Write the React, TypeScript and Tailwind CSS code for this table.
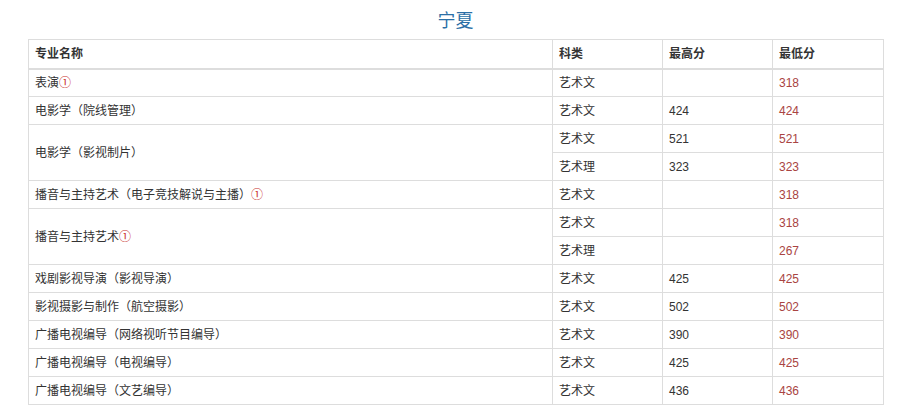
import React from "react";

type Row = { name: React.ReactNode; kind: string; max: string; min: string; span?: number; skipName?: boolean };

const Mark = () => <span className="text-[#c9302c]">①</span>;

const rows: Row[] = [
  { name: <>表演<Mark /></>, kind: "艺术文", max: "", min: "318" },
  { name: "电影学（院线管理）", kind: "艺术文", max: "424", min: "424" },
  { name: "电影学（影视制片）", kind: "艺术文", max: "521", min: "521", span: 2 },
  { name: null, kind: "艺术理", max: "323", min: "323", skipName: true },
  { name: <>播音与主持艺术（电子竞技解说与主播）<Mark /></>, kind: "艺术文", max: "", min: "318" },
  { name: <>播音与主持艺术<Mark /></>, kind: "艺术文", max: "", min: "318", span: 2 },
  { name: null, kind: "艺术理", max: "", min: "267", skipName: true },
  { name: "戏剧影视导演（影视导演）", kind: "艺术文", max: "425", min: "425" },
  { name: "影视摄影与制作（航空摄影）", kind: "艺术文", max: "502", min: "502" },
  { name: "广播电视编导（网络视听节目编导）", kind: "艺术文", max: "390", min: "390" },
  { name: "广播电视编导（电视编导）", kind: "艺术文", max: "425", min: "425" },
  { name: "广播电视编导（文艺编导）", kind: "艺术文", max: "436", min: "436" },
];

export default function App() {
  const td = "border border-[#dddddd] px-[6px] h-[28px] py-0 align-middle";
  const th = "border border-[#dddddd] border-b-2 px-[6px] h-[29px] py-0 align-middle text-left font-bold";
  return (
    <div
      className="bg-white min-h-[412px] text-[#333333] text-[12px]"
      style={{ fontFamily: '"Liberation Sans", Arial, "Noto Sans CJK SC", sans-serif' }}
    >
      <div className="ml-[28px] w-[855px] pt-[9px]">
        <div className="text-center text-[18px] leading-[24px] text-[#2b6fa6] h-[30px]">宁夏</div>
        <table className="w-full border-collapse table-fixed">
          <colgroup>
            <col className="w-[524px]" />
            <col className="w-[110px]" />
            <col className="w-[110px]" />
            <col className="w-[111px]" />
          </colgroup>
          <thead>
            <tr>
              <th className={th}>专业名称</th>
              <th className={th}>科类</th>
              <th className={th}>最高分</th>
              <th className={th}>最低分</th>
            </tr>
          </thead>
          <tbody>
            {rows.map((r, i) => (
              <tr key={i}>
                {!r.skipName && (
                  <td className={td} rowSpan={r.span ?? 1}>
                    {r.name}
                  </td>
                )}
                <td className={td}>{r.kind}</td>
                <td className={td}>{r.max}</td>
                <td className={`${td} text-[#a94442]`}>{r.min}</td>
              </tr>
            ))}
          </tbody>
        </table>
      </div>
    </div>
  );
}
